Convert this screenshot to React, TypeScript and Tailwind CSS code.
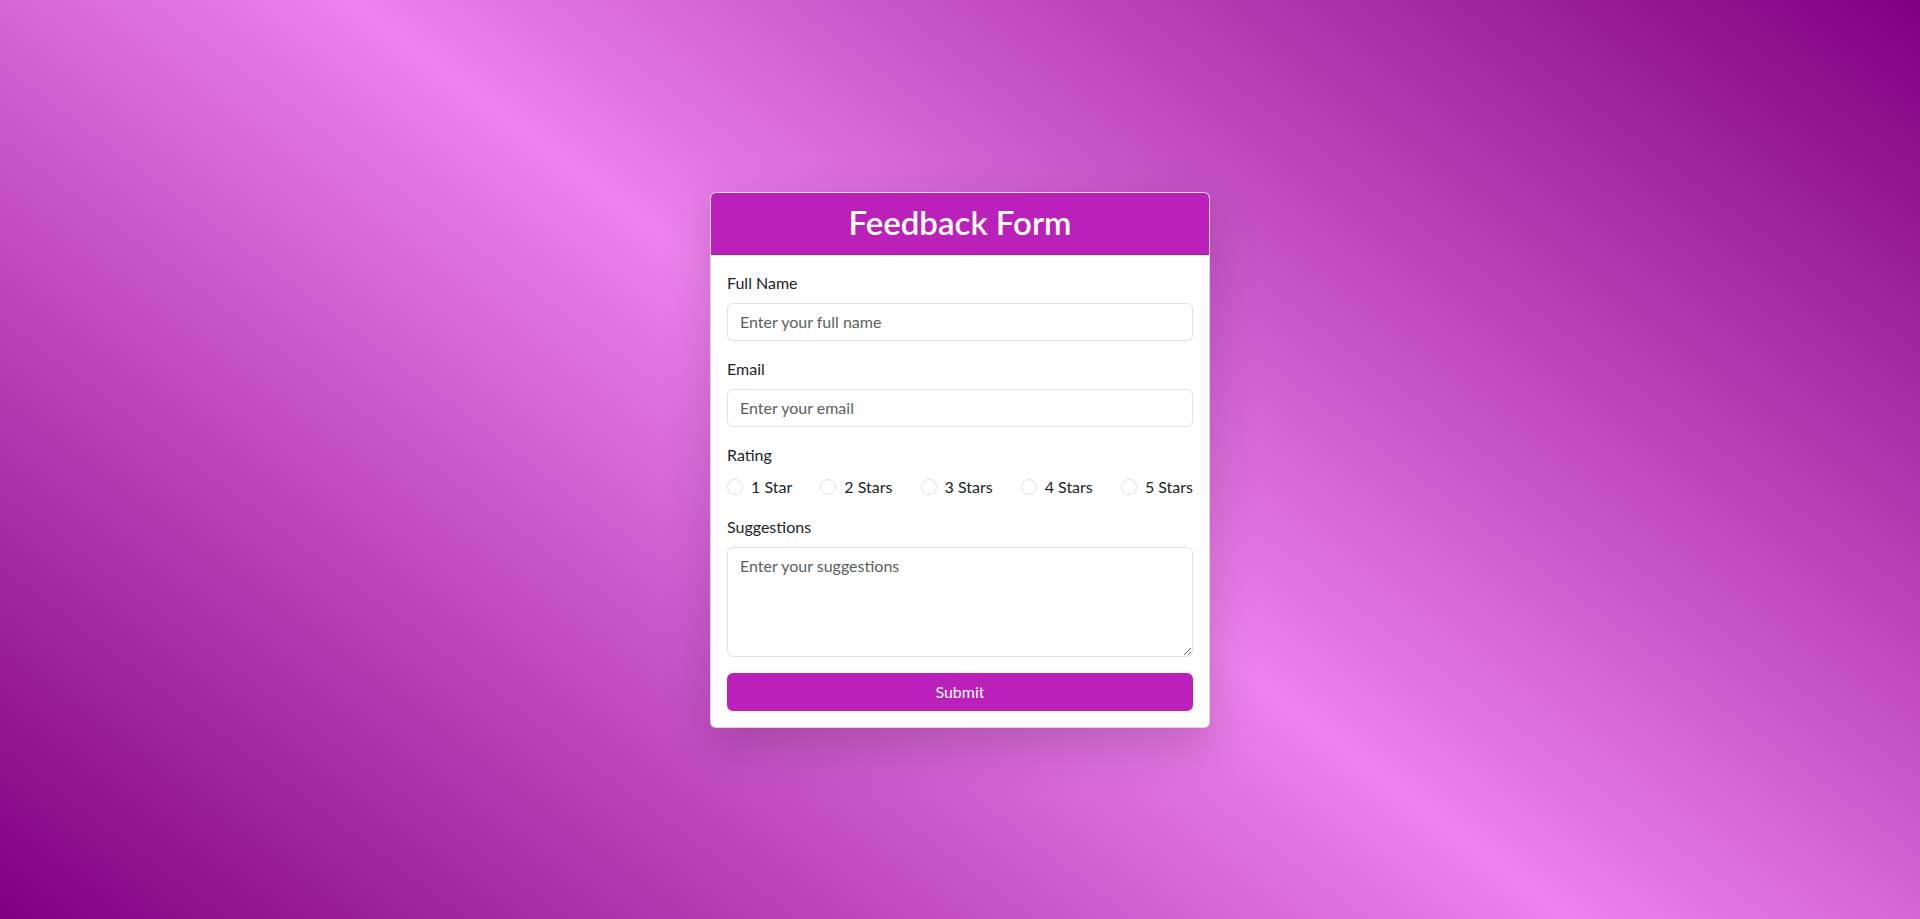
import { useState } from "react";

const ratings = ["1 Star", "2 Stars", "3 Stars", "4 Stars", "5 Stars"];

export default function App() {
  const [rating, setRating] = useState("");

  return (
    <div className="min-h-screen flex items-center justify-center bg-[linear-gradient(37deg,#800080,#ee82ee,#800080)] font-['Segoe_UI',Lato,sans-serif] text-[#212529]">
      <div className="w-[500px] bg-white rounded-md border border-black/15 shadow-[0_16px_48px_rgba(0,0,0,0.175)] overflow-hidden">
        {/* header */}
        <div className="h-[62px] flex items-center justify-center bg-[#bb20bb] border-b border-black/15">
          <h2 className="text-[33px] font-semibold text-white leading-tight">Feedback Form</h2>
        </div>

        <form className="p-4" onSubmit={(e) => e.preventDefault()}>
          <div className="mb-4">
            <label className="block mb-2 text-base leading-6">Full Name</label>
            <input
              type="text"
              placeholder="Enter your full name"
              className="block w-full h-[38px] px-3 text-base border border-[#dee2e6] rounded-md placeholder:text-[#5c6064] outline-none"
            />
          </div>

          <div className="mb-4">
            <label className="block mb-2 text-base leading-6">Email</label>
            <input
              type="email"
              placeholder="Enter your email"
              className="block w-full h-[38px] px-3 text-base border border-[#dee2e6] rounded-md placeholder:text-[#5c6064] outline-none"
            />
          </div>

          <div className="mb-4">
            <label className="block mb-2 text-base leading-6">Rating</label>
            <div className="flex justify-between h-6 mb-1">
              {ratings.map((r) => (
                <label key={r} className="flex items-center gap-2 text-base leading-6 cursor-pointer">
                  <span
                    className={
                      rating === r
                        ? "w-4 h-4 rounded-full border-[5px] border-[#bb20bb] bg-white"
                        : "w-4 h-4 rounded-full border border-[#dee2e6] bg-white"
                    }
                  />
                  <input
                    type="radio"
                    name="rating"
                    value={r}
                    className="hidden"
                    onChange={() => setRating(r)}
                  />
                  {r}
                </label>
              ))}
            </div>
          </div>

          <div className="mb-4">
            <label className="block mb-2 text-base leading-6">Suggestions</label>
            <textarea
              rows={4}
              placeholder="Enter your suggestions"
              className="block w-full h-[110px] px-3 py-1.5 text-base leading-6 border border-[#dee2e6] rounded-md placeholder:text-[#5c6064] outline-none"
            />
          </div>

          <button
            type="submit"
            className="block w-full h-[38px] text-base text-white bg-[#bb20bb] rounded-md"
          >
            Submit
          </button>
        </form>
      </div>
    </div>
  );
}
